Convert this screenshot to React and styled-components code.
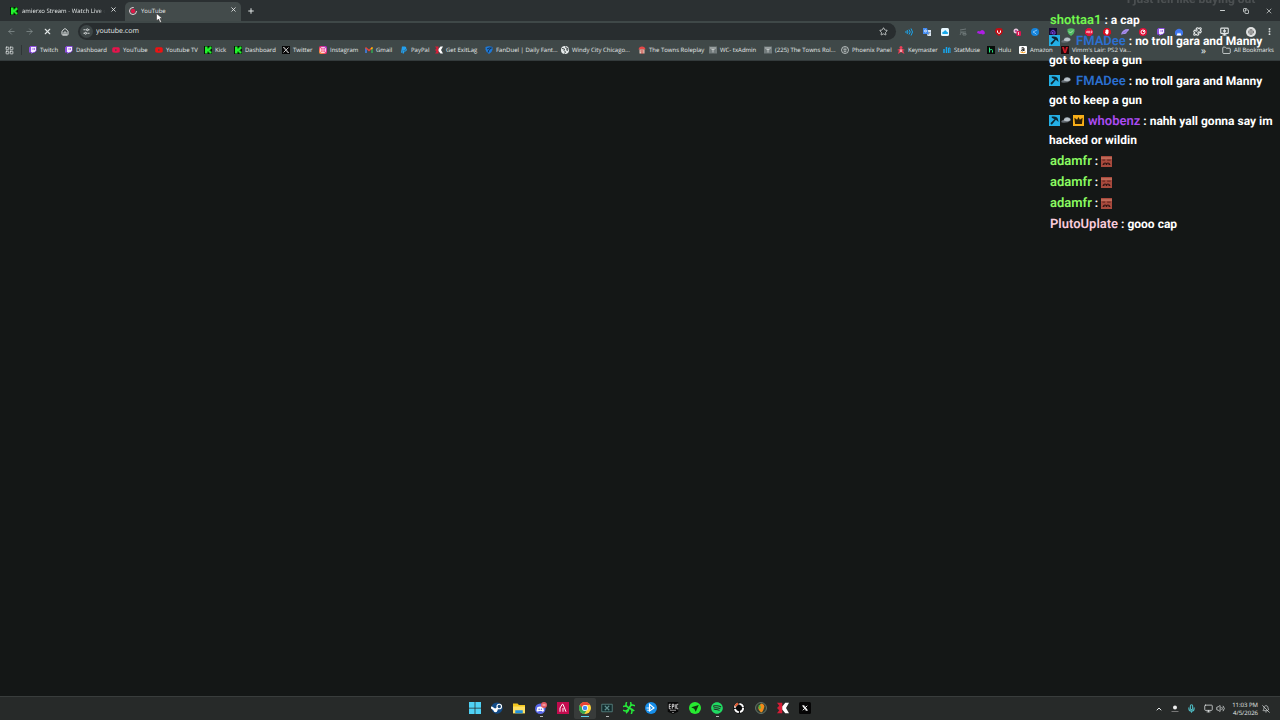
import React from "react";
import styled, { createGlobalStyle } from "styled-components";
import {
    ArrowLeft, ArrowRight, X, House, Plus, Minus, Copy, Star, Puzzle, Folder, Globe, LayoutGrid,
    ChevronUp, Mic, Volume2, Monitor, BellOff, EllipsisVertical, MonitorDown,
} from "lucide-react";
import { FaYoutube, FaPaypal, FaSpotify } from "react-icons/fa6";

const bookmarks = [
    { icon: "twitch", label: "Twitch", width: 36 },
    { icon: "twitch", label: "Dashboard", width: 47 },
    { icon: "youtube", label: "YouTube", width: 43 },
    { icon: "youtubetv", label: "Youtube TV", width: 49 },
    { icon: "kick", label: "Kick", width: 30 },
    { icon: "kick", label: "Dashboard", width: 48 },
    { icon: "twitter", label: "Twitter", width: 37 },
    { icon: "instagram", label: "Instagram", width: 46 },
    { icon: "gmail", label: "Gmail", width: 35 },
    { icon: "paypal", label: "PayPal", width: 35 },
    { icon: "exitlag", label: "Get ExitLag", width: 50 },
    { icon: "fanduel", label: "FanDuel | Daily Fant...", width: 76 },
    { icon: "globe", label: "Windy City Chicago...", width: 77 },
    { icon: "towns", label: "The Towns Roleplay", width: 71 },
    { icon: "txadmin", label: "WC- txAdmin", width: 55 },
    { icon: "txadmin", label: "(225) The Towns Rol...", width: 77 },
    { icon: "phoenix", label: "Phoenix Panel", width: 56 },
    { icon: "keymaster", label: "Keymaster", width: 46 },
    { icon: "statmuse", label: "StatMuse", width: 44 },
    { icon: "hulu", label: "Hulu", width: 32 },
    { icon: "amazon", label: "Amazon", width: 42 },
    { icon: "vimm", label: "Vimm's Lair: PS2 Va...", width: 76 },
]

const extensions = [
    "sound", "translate", "cloud", "note", "dots", "ublock", "pinkbadge", "bluebolt",
    "purplebox", "shield", "abp", "hand", "wing", "target", "twitch", "nord",
]

const apps = [
    { icon: "windows", name: "Start" },
    { icon: "steam", name: "Steam" },
    { icon: "files", name: "File Explorer" },
    { icon: "discord", name: "Discord", running: true },
    { icon: "lambda", name: "Launcher" },
    { icon: "chrome", name: "Chrome", active: true },
    { icon: "capture", name: "Capture", running: true },
    { icon: "razer", name: "Synapse" },
    { icon: "bluearrow", name: "Media" },
    { icon: "epic", name: "Epic Games" },
    { icon: "greenarrow", name: "Navigator" },
    { icon: "spotify", name: "Spotify", running: true },
    { icon: "obs", name: "Recorder" },
    { icon: "flstudio", name: "Music Studio" },
    { icon: "exitlag", name: "ExitLag" },
    { icon: "capcut", name: "CapCut" },
]

const messages = [
    { text: "I just fell like buying out-", faded: true },
    { user: "shottaa1", color: "#73f84e", text: "a cap" },
    { user: "FMADee", color: "#2b6fd0", text: "no troll gara and Manny got to keep a gun", badges: ["pick", "cap"] },
    { user: "FMADee", color: "#2b6fd0", text: "no troll gara and Manny got to keep a gun", badges: ["pick", "cap"] },
    { user: "whobenz", color: "#ab4bf2", text: "nahh yall gonna say im hacked or wildin", badges: ["pick", "cap", "crown"] },
    { user: "adamfr", color: "#8bfb62", emote: true },
    { user: "adamfr", color: "#8bfb62", emote: true },
    { user: "adamfr", color: "#8bfb62", emote: true },
    { user: "PlutoUplate", color: "#f9cbdc", text: "gooo cap" },
]

const Svg = ({ size = 8, children }) => (
    <svg width={size} height={size} viewBox="0 0 16 16" aria-hidden="true">{children}</svg>
)

const Glyph = ({ name, size }) => {
    switch (name) {
        case "twitch":
            return <Svg size={size}><path d="M3 0h12v10l-5 4H7l-3 2v-3H0V3z" fill="#8d4fe0" /><path d="M4 2h10v7l-3 3H8l-2 2v-2H4z" fill="#f4ecff" /><path d="M8 4v4M11 4v4" stroke="#8d4fe0" strokeWidth="1.5" /></Svg>
        case "youtube":
            return <FaYoutube size={size} color="#e6144c" />
        case "youtubetv":
            return <FaYoutube size={size} color="#ee1212" />
        case "kick":
            return <Svg size={size}><path d="M0 0h16v16H0z" fill="#061506" /><path d="M2 1h5v4h2V3h2V1h4v5h-2v2h-2v1h2v2h2v4h-4v-2H9v-2H7v4H2z" fill="#21f32b" /></Svg>
        case "twitter":
            return <Svg size={size}><path d="M0 0h16v16H0z" fill="#080808" /><path d="M3 3l10 10M13 3L3 13" stroke="#fff" strokeWidth="1.5" /><path d="M3 3h2l8 10h-2z" fill="#080808" stroke="#fff" /></Svg>
        case "instagram":
            return (
                <Svg size={size}>
                    <defs>
                        <linearGradient id="insta" x1="0" y1="1" x2="1" y2="0"><stop stopColor="#ffb52e" /><stop offset=".5" stopColor="#f52a78" /><stop offset="1" stopColor="#9c36dc" /></linearGradient>
                    </defs>
                    <rect width="16" height="16" rx="4" fill="url(#insta)" />
                    <rect x="3" y="3" width="10" height="10" rx="3" fill="none" stroke="#fff" strokeWidth="1.5" />
                    <circle cx="8" cy="8" r="2.5" fill="none" stroke="#fff" strokeWidth="1.5" />
                </Svg>
            )
        case "gmail":
            return <Svg size={size}><path d="M2 14V4" stroke="#4285f4" strokeWidth="3" /><path d="M14 14V4" stroke="#34a853" strokeWidth="3" /><path d="M1 3l7 6 7-6" fill="none" stroke="#ea4335" strokeWidth="3" /><path d="M12 6l3-3" stroke="#fbbc04" strokeWidth="3" /></Svg>
        case "paypal":
            return <FaPaypal size={size} color="#23a0ee" />
        case "exitlag":
            return <Svg size={size}><path d="M0 1h7v14H0l3-4-3-3 3-3z" fill="#d51d36" /><path d="M16 1h-5L7 6v4l4 5h5l-4-7z" fill="#fff" /></Svg>
        case "fanduel":
            return <Svg size={size}><path d="M1 2q7-3 14 0v5q-1 6-7 9-6-3-7-9z" fill="#1e78d6" /><path d="M4 6q4-3 9-2-6 2-7 9" fill="none" stroke="#122f51" strokeWidth="2" /></Svg>
        case "globe":
            return <Svg size={size}><circle cx="8" cy="8" r="8" fill="#e6ebeb" /><path d="M2 5l5 1-1 3 3 3-2 3M9 1l1 3 4 1-1 4-3-2" fill="none" stroke="#414a4a" strokeWidth="2" /></Svg>
        case "towns":
            return <Svg size={size}><path d="M1 7q1-6 7-6t7 6z" fill="#e54848" /><path d="M3 7h10v8H3z" fill="#efc9bb" /><path d="M5 10h6M6 14h5" stroke="#b93434" strokeWidth="2" /></Svg>
        case "txadmin":
            return <Svg size={size}><path d="M0 1h16v14H0z" fill="#727b7c" /><path d="M2 4h12M5 7h6M8 7v6" stroke="#d4d8d8" strokeWidth="1.5" /></Svg>
        case "phoenix":
            return <Svg size={size}><circle cx="8" cy="8" r="7" fill="none" stroke="#d8dddd" strokeWidth="1.5" /><path d="M4 5l4 4 4-4M5 10q3 4 6 0M8 3v5" fill="none" stroke="#d8dddd" strokeWidth="1.5" /></Svg>
        case "keymaster":
            return <Svg size={size}><circle cx="8" cy="3" r="3" fill="#f13e58" /><path d="M0 8l5-2h6l5 2-4 1 3 7-7-4-6 4 2-7z" fill="#ef4259" /><path d="M7 7h2v5H7z" fill="#fff" /></Svg>
        case "statmuse":
            return <Svg size={size}><path d="M2 6v8M7 2v12" stroke="#18a6ed" strokeWidth="3" /><path d="M11 14V4h3v10" fill="none" stroke="#18a6ed" strokeWidth="2" /></Svg>
        case "hulu":
            return <Svg size={size}><path d="M0 0h16v16H0z" fill="#080d0a" /><path d="M5 3v10M5 8q6-3 6 1v4" fill="none" stroke="#20e77b" strokeWidth="2" /></Svg>
        case "amazon":
            return <Svg size={size}><rect width="16" height="16" rx="2" fill="#fff" /><path d="M5 4q5-2 5 1v5M10 6q-5 0-5 3 2 2 5-1" fill="none" stroke="#111" strokeWidth="2" /><path d="M3 12q6 3 10 0" fill="none" stroke="#ff9d14" strokeWidth="2" /></Svg>
        case "vimm":
            return <Svg size={size}><path d="M0 0h16v16H0z" fill="#1d080a" /><path d="M2 2h4l2 8 2-8h4l-4 12H6z" fill="#ce1825" /></Svg>
        case "sound":
            return <Svg size={size}><path d="M2 6v4M4 4q4 4 0 8M8 3q5 5 0 10M12 1q6 7 0 14" fill="none" stroke="#1ba6ee" strokeWidth="2" /></Svg>
        case "translate":
            return <Svg size={size}><path d="M7 4h9v12H9z" fill="#d9e4ee" /><path d="M0 0h8l4 12H0z" fill="#438cf2" /><circle cx="5" cy="6" r="2" fill="none" stroke="#fff" strokeWidth="1.5" /><path d="M10 9h5M13 8q0 4-3 6" stroke="#6b8195" fill="none" /></Svg>
        case "cloud":
            return <Svg size={size}><rect width="16" height="16" rx="3" fill="#e8f8ff" /><path d="M3 12q-2-5 3-5 3-5 6 1 4 1 1 4z" fill="#17a9ea" /></Svg>
        case "note":
            return <Svg size={size}><path d="M2 4l12-2M2 8h12M5 8l-3 6M8 8v6h6v-3H8" stroke="#6d7677" strokeWidth="2" fill="none" /></Svg>
        case "dots":
            return <Svg size={size}><path d="M0 8q3-3 6-1 3-5 7-2 4 3 2 7-4 2-7-1-2 2-4 0-3 1-4-3z" fill="#b01de6" /></Svg>
        case "ublock":
            return <Svg size={size}><path d="M2 1l6-1 6 1 2 6q-2 7-8 9Q2 14 0 7z" fill="#c40c14" /><path d="M5 5v4q3 4 6 0V5" fill="none" stroke="#fff" strokeWidth="2" /></Svg>
        case "pinkbadge":
            return <Svg size={size}><circle cx="6" cy="6" r="5" fill="#e9c5dc" /><circle cx="6" cy="6" r="2" fill="#a13c8c" /><rect x="7" y="6" width="9" height="10" rx="2" fill="#dc1450" /><path d="M11 8v6" stroke="#fff" strokeWidth="1.5" /></Svg>
        case "bluebolt":
            return <Svg size={size}><circle cx="8" cy="8" r="8" fill="#1584dc" /><path d="M12 4L4 8l4 2 3 3" fill="none" stroke="#a6d5ff" strokeWidth="1.5" /></Svg>
        case "purplebox":
            return <Svg size={size}><path d="M0 0h16v16H0z" fill="#160c31" /><path d="M4 12V7q4-6 8 0v5H7V8h4" fill="none" stroke="#7443d7" strokeWidth="2" /></Svg>
        case "shield":
            return <Svg size={size}><path d="M1 2q7-3 14 0v5q-1 6-7 9-6-3-7-9z" fill="#51ba62" /><path d="M4 7l3 3 5-5" fill="none" stroke="#b8e6bf" strokeWidth="2" /></Svg>
        case "abp":
            return <Svg size={size}><path d="M5 0h6l5 5v6l-5 5H5l-5-5V5z" fill="#e4123b" /><path d="M3 10V7l2-1v4M7 6v4h2V6zM12 11V6h2v3h-2" fill="none" stroke="#fff" /></Svg>
        case "hand":
            return <Svg size={size}><path d="M5 0h6l5 5v6l-5 5H5l-5-5V5z" fill="#d80d1f" /><path d="M5 7V4h1V3h4v1h1v6l-2 3H7l-3-4z" fill="#fff" /></Svg>
        case "wing":
            return <Svg size={size}><path d="M0 13Q3 1 16 2q0 4-4 6-1 5-6 4z" fill="#aa91ee" /><path d="M3 11l8-5" stroke="#6f52bb" /></Svg>
        case "target":
            return <Svg size={size}><circle cx="8" cy="8" r="8" fill="#e31039" /><circle cx="8" cy="8" r="4" fill="none" stroke="#fff" strokeWidth="2" /><path d="M8 8l4-4" stroke="#fff" strokeWidth="2" /></Svg>
        case "nord":
            return <Svg size={size}><path d="M2 15a8 8 0 1 1 12 0z" fill="#3f76ee" /><path d="M3 15l3-6 2 3 2-3 3 6z" fill="#fff" /></Svg>
        case "windows":
            return <Svg size={size}><path d="M0 0h7.5v7.5H0zM8.5 0H16v7.5H8.5zM0 8.5h7.5V16H0zM8.5 8.5H16V16H8.5z" fill="#4fd2f5" /></Svg>
        case "steam":
            return <Svg size={size}><circle cx="8" cy="8" r="7.5" fill="#124b87" /><path d="M0 7l6 4 5-5" fill="none" stroke="#fff" strokeWidth="3" /><circle cx="11" cy="6" r="3" fill="#174774" stroke="#fff" strokeWidth="1.5" /><circle cx="6" cy="11" r="2.5" fill="#fff" /></Svg>
        case "files":
            return <Svg size={size}><path d="M0 2h6l2 2h8v11H0z" fill="#f4c71e" /><path d="M0 6h16v9H0z" fill="#ffe063" /><path d="M3 11h10v4H3z" fill="#2291dc" /></Svg>
        case "discord":
            return <Svg size={size}><circle cx="7" cy="9" r="7" fill="#5968e9" /><path d="M3 7q4-2 8 0l1 5-2 1-1-1H5l-1 1-2-1z" fill="#fff" /><circle cx="5.5" cy="9.5" r="1" fill="#5968e9" /><circle cx="8.5" cy="9.5" r="1" fill="#5968e9" /><circle cx="12" cy="4" r="4" fill="#e45b64" /><path d="M10 4h4" stroke="#f9c6ca" strokeWidth="1.5" /></Svg>
        case "lambda":
            return <Svg size={size}><path d="M0 0h16v16H0z" fill="#c30b4e" /><path d="M4 13V8l3-5h1l4 10M8 8v5" fill="none" stroke="#fff" strokeWidth="1.3" /></Svg>
        case "chrome":
            return <Svg size={size}><circle cx="8" cy="8" r="8" fill="#ffd43b" /><path d="M1 4a8 8 0 0 1 14 0H8L5 10z" fill="#e94335" /><path d="M1 4a8 8 0 0 0 6 12l4-6-6-1z" fill="#34a853" /><circle cx="8" cy="8" r="4" fill="#fff" /><circle cx="8" cy="8" r="3" fill="#4285f4" /></Svg>
        case "capture":
            return <Svg size={size}><path d="M1 3h14v10H1z" fill="#122b2c" stroke="#61908f" /><path d="M5 5l6 6M11 5l-6 6" stroke="#61908f" strokeWidth="1.5" /></Svg>
        case "razer":
            return <Svg size={size}><path d="M8 8Q2 5 5 0M8 8Q10 2 16 5M8 8q6 2 3 8M8 8q-3 6-8 3M8 8Q4 4 0 6M8 8q4-3 2-8M8 8q4 1 7 4M8 8q0 4-4 7" fill="none" stroke="#25ea39" strokeWidth="2" /></Svg>
        case "bluearrow":
            return <Svg size={size}><circle cx="8" cy="8" r="8" fill="#168ee9" /><path d="M6 3l6 5-6 4z" fill="none" stroke="#fff" strokeWidth="1.5" /><path d="M2 8h6M3 11h4" stroke="#fff" strokeWidth="1.2" /></Svg>
        case "epic":
            return <Svg size={size}><path d="M1 0h14v13l-7 3-7-3z" fill="#080808" /><path d="M5 3H3v6h2M3 6h2M7 9V3h2v3H7M11 3v6M15 3h-2v6h2" fill="none" stroke="#fff" /><path d="M4 11h8M7 14h2" stroke="#c9c9c9" /></Svg>
        case "greenarrow":
            return <Svg size={size}><circle cx="8" cy="8" r="8" fill="#27ea31" /><path d="M3 7l10-3-4 9-2-4z" fill="#10340f" /></Svg>
        case "spotify":
            return <FaSpotify size={size} color="#20da62" />
        case "obs":
            return <Svg size={size}><circle cx="8" cy="8" r="7.5" fill="#090909" /><circle cx="8" cy="8" r="5.5" fill="none" stroke="#fff" strokeWidth="2.5" strokeDasharray="7 1.6" /><path d="M3 6a6 6 0 0 1 4-4" stroke="#e1572b" fill="none" strokeWidth="2.5" /></Svg>
        case "flstudio":
            return <Svg size={size}><circle cx="8" cy="8" r="7.3" fill="#303d31" stroke="#788a7d" /><path d="M8 2q6 1 4 6-1 5-4 6-5-4-3-8z" fill="#f18a1b" /><path d="M5 4q3 0 3 4-2 3-3 0z" fill="#51bb45" /></Svg>
        case "capcut":
            return <Svg size={size}><rect width="16" height="16" rx="2" fill="#050505" /><path d="M5 5l6 6M11 5l-2 2M7 9l-2 2M5 5h2l4 6H9z" fill="none" stroke="#fff" strokeWidth="1.2" /></Svg>
        case "pick":
            return <Svg size={size}><path d="M0 0h16v16H0z" fill="#24afe5" /><path d="M4 2h3q5 0 6 4l1 4-4-3-6 7-2-2 6-6-4-2z" fill="#0c2733" /></Svg>
        case "cap":
            return <Svg size={size}><path d="M1 11q-2-3 3-4 1-5 6-4 5 1 4 5-4 4-13 3z" fill="#656d73" /><path d="M4 8q1-5 6-4 5 1 3 4-4 2-9 0z" fill="#b9c2c8" /></Svg>
        case "crown":
            return <Svg size={size}><path d="M0 0h16v16H0z" fill="#f8ae18" /><path d="M2 4l4 3 2-4 2 4 4-3-1 9H3z" fill="#2c1d04" /></Svg>
        case "emote":
            return <Svg size={size}><path d="M0 0h16v16H0z" fill="#a84a3d" /><path d="M0 2h16v2H0z" fill="#ca7763" /><path d="M2 6h4M9 6h5" stroke="#6b2a22" strokeWidth="1.5" /><path d="M2 13q2-5 6-3 4-2 6 3z" fill="#35120f" /><path d="M5 12h2M9 12h2" stroke="#dc8b80" /></Svg>
        case "tune":
            return <Svg size={size}><path d="M1 4h5M10 12h5M12 4h3M1 12h3" stroke="#e2e6e6" strokeWidth="2" /><circle cx="10" cy="4" r="2.2" fill="none" stroke="#e2e6e6" strokeWidth="2" /><circle cx="6" cy="12" r="2.2" fill="none" stroke="#e2e6e6" strokeWidth="2" /></Svg>
        default:
            return null
    }
}

const App = () => {
    return (
        <>
            <GlobalStyle />
            <Desktop>
                <TabStrip>
                    <Tab>
                        <Glyph name="kick" size={8} />
                        <TabTitle $fade>amierxo Stream - Watch Live on</TabTitle>
                        <IconButton aria-label="Close tab"><X size={7} strokeWidth={3} /></IconButton>
                    </Tab>
                    <Tab $active>
                        <Svg size={8}>
                            <circle cx="8" cy="8" r="7" fill="none" stroke="#e7d5da" strokeWidth="2" strokeDasharray="34 10" />
                            <circle cx="8" cy="8" r="4.5" fill="#dc1846" />
                        </Svg>
                        <TabTitle>YouTube</TabTitle>
                        <IconButton aria-label="Close tab"><X size={7} strokeWidth={3} /></IconButton>
                    </Tab>
                    <IconButton $size={20} aria-label="New tab"><Plus size={8} strokeWidth={3} /></IconButton>
                    <WindowControls>
                        <IconButton $size={23} aria-label="Minimize"><Minus size={7} strokeWidth={3} /></IconButton>
                        <IconButton $size={23} aria-label="Restore"><Copy size={6} strokeWidth={3} /></IconButton>
                        <IconButton $size={23} aria-label="Close"><X size={8} /></IconButton>
                    </WindowControls>
                </TabStrip>

                <Toolbar>
                    <IconButton $size={18} $dim aria-label="Back"><ArrowLeft size={9} /></IconButton>
                    <IconButton $size={18} $dim aria-label="Forward"><ArrowRight size={9} /></IconButton>
                    <IconButton $size={18} aria-label="Stop"><X size={9} strokeWidth={3} /></IconButton>
                    <IconButton $size={18} aria-label="Home"><House size={8} strokeWidth={3} /></IconButton>
                    <AddressBar>
                        <SiteInfo aria-label="Site information"><Glyph name="tune" size={7} /></SiteInfo>
                        <AddressInput aria-label="Address" defaultValue="youtube.com" />
                        <IconButton aria-label="Bookmark this page"><Star size={9} strokeWidth={2} /></IconButton>
                    </AddressBar>
                    <Extensions>
                        {extensions.map((name) => (
                            <IconButton key={name} $size={18} aria-label={name}><Glyph name={name} size={8} /></IconButton>
                        ))}
                        <IconButton $size={18} aria-label="Extensions"><Puzzle size={9} strokeWidth={3} /></IconButton>
                    </Extensions>
                    <ToolbarEnd>
                        <IconButton $size={18} aria-label="Cast"><MonitorDown size={9} strokeWidth={3} /></IconButton>
                        <Avatar aria-label="Profile"><Globe size={6} /></Avatar>
                        <IconButton $size={18} aria-label="Menu"><EllipsisVertical size={9} strokeWidth={3} /></IconButton>
                    </ToolbarEnd>
                </Toolbar>

                <BookmarkBar>
                    <AppsButton aria-label="Apps"><LayoutGrid size={9} /></AppsButton>
                    {bookmarks.map(({ icon, label, width }, i) => (
                        <Bookmark key={i} href="#" $width={width}>
                            <Glyph name={icon} size={8} />
                            {label}
                        </Bookmark>
                    ))}
                    <MoreButton aria-label="More bookmarks">»</MoreButton>
                    <Bookmark href="#" $width={50}><Folder size={9} />All Bookmarks</Bookmark>
                </BookmarkBar>

                <Page />

                <Taskbar>
                    <span />
                    <AppList>
                        {apps.map(({ icon, name, active, running }) => (
                            <AppButton key={name} aria-label={name} $active={active} $running={running}>
                                <Glyph name={icon} size={12} />
                            </AppButton>
                        ))}
                    </AppList>
                    <Tray>
                        <ChevronUp size={8} strokeWidth={3} />
                        <Svg size={8}><circle cx="8" cy="5" r="4" fill="#eee" /><path d="M1 13h14" stroke="#777" strokeWidth="2" /></Svg>
                        <Mic size={9} color="#4db8bf" strokeWidth={3} />
                        <TrayGroup>
                            <Monitor size={9} strokeWidth={2} />
                            <Volume2 size={9} strokeWidth={2} />
                        </TrayGroup>
                        <Clock>
                            <span>11:03 PM</span>
                            <span>4/5/2026</span>
                        </Clock>
                        <BellOff size={8} strokeWidth={2} />
                    </Tray>
                </Taskbar>

                <Chat>
                    {messages.map(({ user, color, text, badges, emote, faded }, i) => (
                        <Message key={i} $faded={faded} $badged={!!badges}>
                            {badges && (
                                <Badges>
                                    {badges.map((badge) => <Glyph key={badge} name={badge} size={11} />)}
                                </Badges>
                            )}
                            {user && <UserName $color={color}>{user}</UserName>}
                            <MessageText>
                                {user && " : "}
                                {emote ? <Emote><Glyph name="emote" size={11} /></Emote> : text}
                            </MessageText>
                        </Message>
                    ))}
                </Chat>

                <Pointer>
                    <svg width="7" height="10" viewBox="0 0 14 20" aria-hidden="true">
                        <path d="M1 1v15l4-4 3 7 3-1-3-7h5z" fill="#fff" stroke="#222" />
                    </svg>
                </Pointer>
            </Desktop>
        </>
    )
}

const GlobalStyle = createGlobalStyle`
*{
    box-sizing: border-box;
}
body{
    margin: 0;
    background: #141716;
    text-rendering: geometricPrecision;
}
button, input{
    font: inherit;
    color: inherit;
    border: none;
    background: none;
    padding: 0;
    margin: 0;
    text-rendering: inherit;
}
svg{
    flex: none;
}
`

const Desktop = styled.div`
    position: relative;
    display: flex;
    flex-direction: column;
    min-height: 100vh;
    overflow: hidden;
    background: #141716;
    color: #e6eaea;
    font-family: "Open Sans", "Noto Sans", sans-serif;
    font-size: 6px;
    line-height: 10px;
`

const TabStrip = styled.header`
    display: flex;
    align-items: stretch;
    height: 21px;
    padding: 2px 0 0 6px;
    background: #2b3032;
`

const Tab = styled.div`
    display: flex;
    align-items: center;
    gap: 4px;
    width: ${({ $active }) => ($active ? "116px" : "115px")};
    margin-left: ${({ $active }) => ($active ? "4px" : 0)};
    padding: 0 4px 2px;
    border-radius: 5px 5px 0 0;
    background: ${({ $active }) => ($active ? "#434b4b" : "transparent")};
`

const TabTitle = styled.span`
    flex: 1;
    min-width: 0;
    overflow: hidden;
    white-space: nowrap;
    mask-image: ${({ $fade }) => ($fade ? "linear-gradient(to right, #000 92%, transparent)" : "none")};
`

const IconButton = styled.button`
    display: flex;
    align-items: center;
    justify-content: center;
    flex: none;
    width: ${({ $size }) => $size || 8}px;
    color: ${({ $dim }) => ($dim ? "#879090" : "#e2e6e6")};

    header > &, header > div > &{
        padding-bottom: 2px;
    }
`

const WindowControls = styled.div`
    display: flex;
    margin-left: auto;
`

const Toolbar = styled.div`
    display: flex;
    align-items: center;
    height: 21px;
    padding: 0 2px;
    background: #3f4848;
`

const AddressBar = styled.div`
    display: flex;
    align-items: center;
    flex: 1;
    height: 17px;
    margin-left: 4px;
    padding: 0 9px 0 2px;
    border-radius: 9px;
    background: #282d2f;
`

const SiteInfo = styled.button`
    display: flex;
    align-items: center;
    justify-content: center;
    width: 13px;
    height: 13px;
    border-radius: 50%;
    background: #3e4647;
`

const AddressInput = styled.input`
    flex: 1;
    min-width: 0;
    padding: 1px 0 0 3px;
    font-size: 7px;
    outline: none;
`

const Extensions = styled.div`
    display: flex;
    padding: 0 9px 0 4px;
`

const ToolbarEnd = styled.div`
    display: flex;
    align-items: center;
`

const Avatar = styled.button`
    display: flex;
    align-items: center;
    justify-content: center;
    width: 10px;
    height: 10px;
    margin: 0 4px 0 13px;
    border-radius: 50%;
    background: #e0e2e2;
    color: #555;
`

const BookmarkBar = styled.nav`
    display: flex;
    align-items: center;
    height: 19px;
    padding: 0 8px 2px 5px;
    border-bottom: 1px solid #343b3c;
    background: #3f4848;
`

const AppsButton = styled.button`
    display: flex;
    align-items: center;
    justify-content: center;
    width: 17px;
    height: 10px;
    margin-right: 7px;
    padding-right: 7px;
    border-right: 1px solid #2f3536;
`

const Bookmark = styled.a`
    display: flex;
    align-items: center;
    flex: none;
    gap: 3px;
    width: ${({ $width }) => $width}px;
    white-space: nowrap;
    color: inherit;
    text-decoration: none;
`

const MoreButton = styled.button`
    margin-left: auto;
    margin-right: 16px;
    font-size: 10px;
`

const Page = styled.main`
    flex: 1;
    background: #141716;
`

const Taskbar = styled.footer`
    display: grid;
    grid-template-columns: 1fr auto 1fr;
    align-items: center;
    height: 24px;
    border-top: 1px solid #393d3c;
    background: #272a29;
`

const AppList = styled.div`
    display: flex;
`

const AppButton = styled.button`
    display: flex;
    flex-direction: column;
    align-items: center;
    justify-content: center;
    width: 22px;
    height: 21px;
    padding-top: 2px;
    border-radius: 2px;
    background: ${({ $active }) => ($active ? "#383b3a" : "transparent")};

    &::after{
        content: "";
        width: ${({ $active }) => ($active ? 8 : 3)}px;
        height: 1px;
        margin-top: 2px;
        background: ${({ $active, $running }) => ($active ? "#5fd0ee" : $running ? "#b5b8b7" : "transparent")};
    }
`

const Tray = styled.div`
    display: flex;
    align-items: center;
    justify-content: flex-end;
    gap: 8px;
    padding-right: 10px;
`

const TrayGroup = styled.div`
    display: flex;
    gap: 3px;
    margin-right: -1px;
`

const Clock = styled.time`
    display: flex;
    flex-direction: column;
    text-align: right;
    margin-right: -4px;
    line-height: 8px;
`

const Chat = styled.aside`
    position: absolute;
    top: -11px;
    right: 0;
    width: 231px;
    font-family: Roboto, sans-serif;
    font-size: 13px;
    font-weight: 600;
    line-height: 19px;
    color: #fff;
`

const Message = styled.div`
    padding: 1px 0;
    padding-right: ${({ $faded }) => ($faded ? "20px" : 0)};
    text-indent: ${({ $badged }) => ($badged ? 0 : 1)}px;
    text-align: ${({ $faded }) => ($faded ? "right" : "left")};
    opacity: ${({ $faded }) => ($faded ? 0.15 : 1)};
`

const Badges = styled.span`
    display: inline-flex;
    align-items: center;
    gap: 1px;
    height: 11px;
    margin-right: 4px;
    vertical-align: -1px;
`

const UserName = styled.span`
    color: ${({ $color }) => $color};
`

const MessageText = styled.span`
    font-size: 12px;
    font-weight: 700;
`

const Emote = styled.span`
    display: inline-flex;
    vertical-align: -2px;
`

const Pointer = styled.div`
    position: absolute;
    top: 13px;
    left: 156px;
    line-height: 0;
`

export default App
